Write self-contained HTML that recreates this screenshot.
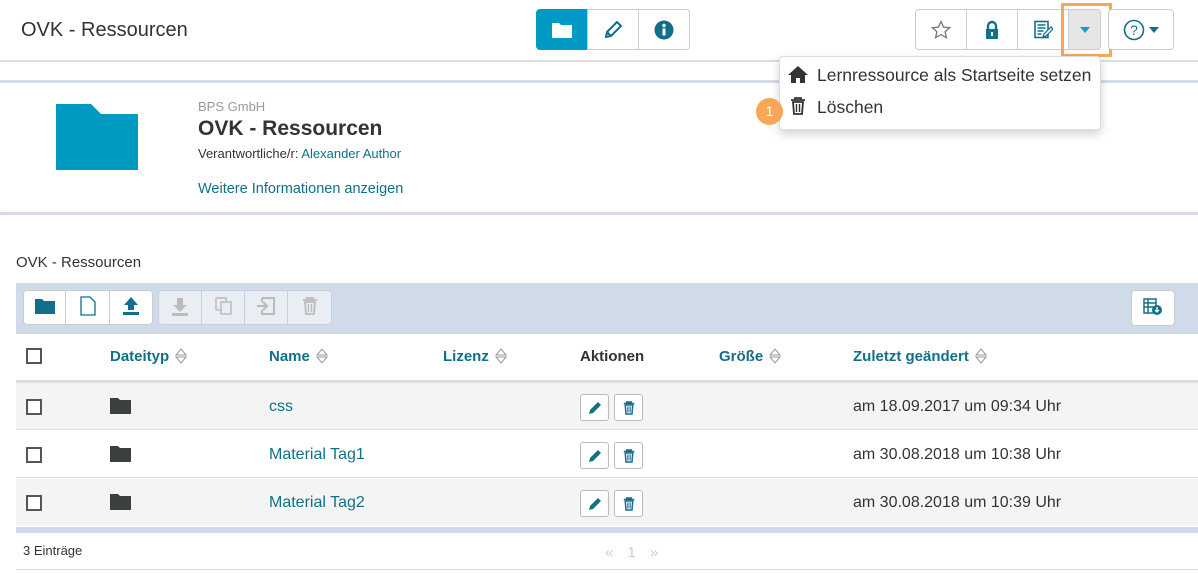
<!DOCTYPE html>
<html><head><meta charset="utf-8"><style>
*{box-sizing:border-box;margin:0;padding:0}
body{width:1198px;height:574px;position:relative;background:#fff;font-family:"Liberation Sans",Arial,sans-serif;color:#333;overflow:hidden}
.a{position:absolute}
.btn{position:absolute;border:1px solid #ccc;background:#fff;display:flex;align-items:center;justify-content:center}
.teal{color:#117089}
.th{position:absolute;top:348px;font-size:15px;font-weight:bold;color:#117089}
.sort{display:inline-block;width:12px;height:16px;vertical-align:-3px;margin-left:6px}
.cb{position:absolute;left:26px;width:16px;height:16px;border:2px solid #555;background:#fff}
.row{position:absolute;left:0;width:1198px;height:47px}
.ab{position:absolute;width:29px;height:27px;border:1px solid #bbb;border-radius:3px;background:#fff;display:flex;align-items:center;justify-content:center}
.cell{position:absolute;font-size:16px}
</style></head><body>
<div class="a" style="left:21px;top:19px;font-size:20px;color:#333">OVK - Ressourcen</div>

<div class="btn" style="left:536px;top:9px;width:52px;height:41px;background:#009ac4;border-color:#009ac4;border-radius:4px 0 0 4px">
<svg width="22" height="18" viewBox="0 0 22 18"><path d="M1 2h7l2 2h11v13H1z" fill="#fff"/></svg></div>
<div class="btn" style="left:587px;top:9px;width:52px;height:41px">
<svg width="20" height="20" viewBox="0 0 20 20"><path d="M3 17l1-5L14 2l4 4L8 16z" fill="none" stroke="#117089" stroke-width="2"/><path d="M4 12l4 4" stroke="#117089" stroke-width="2"/></svg></div>
<div class="btn" style="left:638px;top:9px;width:52px;height:41px;border-radius:0 4px 4px 0">
<svg width="20" height="20" viewBox="0 0 20 20"><circle cx="10" cy="10" r="9.5" fill="#117089"/><rect x="8.5" y="8.5" width="3" height="7" fill="#fff"/><circle cx="10" cy="5.5" r="1.7" fill="#fff"/></svg></div>

<div class="btn" style="left:915px;top:9px;width:52px;height:41px;border-radius:4px 0 0 4px">
<svg width="20" height="20" viewBox="0 0 20 20"><path d="M10 1.5l2.6 5.6 6 .6-4.5 4 1.3 6L10 14.6 4.6 17.7l1.3-6L1.4 7.7l6-.6z" fill="none" stroke="#777" stroke-width="1.3"/></svg></div>
<div class="btn" style="left:966px;top:9px;width:52px;height:41px">
<svg width="16" height="20" viewBox="0 0 16 20"><path d="M4 9V6a4 4 0 0 1 8 0v3" fill="none" stroke="#117089" stroke-width="2.4"/><rect x="2" y="9" width="12" height="10" fill="#117089"/><rect x="7" y="12" width="2" height="4" fill="#fff"/></svg></div>
<div class="btn" style="left:1017px;top:9px;width:52px;height:41px">
<svg width="20" height="20" viewBox="0 0 20 20"><rect x="2" y="1.5" width="13" height="16" fill="none" stroke="#117089" stroke-width="1.6"/><path d="M4.5 5h8M4.5 8h8M4.5 11h6M4.5 14h4" stroke="#117089" stroke-width="1.4"/><path d="M10 17l1-3 7-7 2 2-7 7z" fill="#fff" stroke="#117089" stroke-width="1.2"/></svg></div>
<div class="btn" style="left:1068px;top:9px;width:33px;height:41px;background:#e6e6e6;border-radius:0 4px 4px 0">
<svg width="10" height="6"><path d="M0 0h10L5 6z" fill="#0aa0cc"/></svg></div>
<div class="a" style="left:1061px;top:3px;width:51px;height:54px;border:3px solid #f7a857"></div>
<div class="btn" style="left:1108px;top:9px;width:66px;height:41px;border-radius:4px">
<svg width="22" height="22" viewBox="0 0 22 22"><circle cx="11" cy="11" r="9.5" fill="none" stroke="#117089" stroke-width="1.6"/><text x="11" y="16" font-size="14" text-anchor="middle" fill="#117089" font-family="Liberation Sans">?</text></svg>
<svg width="10" height="6" style="margin-left:4px"><path d="M0 0h10L5 6z" fill="#117089"/></svg></div>

<div class="a" style="left:0;top:60px;width:1198px;height:2px;background:#ddd"></div>

<div class="a" style="left:-3px;top:80px;width:1205px;height:135px;border:3px solid #d3dce8;border-radius:4px"></div>
<svg class="a" style="left:56px;top:104px" width="82" height="66" viewBox="0 0 82 66"><path d="M0 0h35l10 10h37v56H0z" fill="#009bc0"/></svg>
<div class="a" style="left:198px;top:99px;font-size:13px;color:#999">BPS GmbH</div>
<div class="a" style="left:198px;top:117px;font-size:21px;font-weight:bold;color:#333">OVK - Ressourcen</div>
<div class="a" style="left:198px;top:146px;font-size:13px;color:#333">Verantwortliche/r: <span class="teal">Alexander Author</span></div>
<div class="a" style="left:198px;top:181px;font-size:14.5px;color:#117089">Weitere Informationen anzeigen</div>

<div class="a" style="left:779px;top:56px;width:322px;height:74px;background:#fff;border:1px solid #ddd;border-radius:4px;box-shadow:0 4px 10px rgba(0,0,0,.18)"></div>
<svg class="a" style="left:788px;top:66px" width="20" height="17" viewBox="0 0 20 17"><path d="M10 0L0 9h3v8h5v-5h4v5h5V9h3z" fill="#333"/></svg>
<div class="a" style="left:817px;top:65px;font-size:17.5px;color:#333">Lernressource als Startseite setzen</div>
<svg class="a" style="left:790px;top:97px" width="16" height="18" viewBox="0 0 16 18"><path d="M1 3h14M5 3V1h6v2" stroke="#333" stroke-width="1.8" fill="none"/><path d="M3 5h10l-1 12H4z" fill="none" stroke="#333" stroke-width="1.8"/><path d="M6.5 7v8M9.5 7v8" stroke="#333" stroke-width="1.4"/></svg>
<div class="a" style="left:817px;top:97px;font-size:17.5px;color:#333">Löschen</div>
<div class="a" style="left:756px;top:98px;width:27px;height:27px;border-radius:50%;background:#f7a857;color:#fff;font-size:14px;text-align:center;line-height:27px">1</div>

<div class="a" style="left:16px;top:254px;font-size:15px;color:#333">OVK - Ressourcen</div>

<div class="a" style="left:16px;top:283px;width:1182px;height:51px;background:#cfdbe8"></div>
<div class="a" style="left:23px;top:290px;width:130px;height:35px;background:#fff;border:1px solid #ccc;border-radius:4px"></div>
<div class="a" style="left:65px;top:290px;width:1px;height:35px;background:#ccc"></div>
<div class="a" style="left:109px;top:290px;width:1px;height:35px;background:#ccc"></div>
<svg class="a" style="left:35px;top:298px" width="20" height="17" viewBox="0 0 20 17"><path d="M0 1h7l2 2h11v13H0z" fill="#117089"/></svg>
<svg class="a" style="left:80px;top:296px" width="16" height="20" viewBox="0 0 16 20"><path d="M1 1h9l5 5v13H1z" fill="none" stroke="#117089" stroke-width="1.3"/></svg>
<svg class="a" style="left:122px;top:296px" width="18" height="20" viewBox="0 0 18 20"><path d="M9 1l7 8h-4v5H6V9H2z" fill="#117089"/><rect x="1" y="16" width="16" height="3" fill="#117089"/></svg>
<div class="a" style="left:158px;top:290px;width:174px;height:35px;background:#e9edf4;border:1px solid #ccd;border-radius:4px"></div>
<div class="a" style="left:201px;top:290px;width:1px;height:35px;background:#ccd"></div>
<div class="a" style="left:244px;top:290px;width:1px;height:35px;background:#ccd"></div>
<div class="a" style="left:287px;top:290px;width:1px;height:35px;background:#ccd"></div>
<svg class="a" style="left:171px;top:297px" width="18" height="20" viewBox="0 0 18 20"><path d="M6 1h6v7h4l-7 7-7-7h4z" fill="#bbb"/><rect x="1" y="16" width="16" height="3" fill="#bbb"/></svg>
<svg class="a" style="left:214px;top:296px" width="20" height="20" viewBox="0 0 20 20"><rect x="2" y="2" width="10" height="12" fill="none" stroke="#bbb" stroke-width="1.5"/><rect x="7" y="6" width="10" height="12" fill="#e9edf4" stroke="#bbb" stroke-width="1.5"/></svg>
<svg class="a" style="left:256px;top:296px" width="20" height="20" viewBox="0 0 20 20"><path d="M6 2h12v16H6v-4M6 6V2" fill="none" stroke="#bbb" stroke-width="2"/><path d="M1 10h9M7 6l4 4-4 4" fill="none" stroke="#bbb" stroke-width="2"/></svg>
<svg class="a" style="left:302px;top:297px" width="16" height="18" viewBox="0 0 16 18"><path d="M1 3h14M5 3V1h6v2" stroke="#bbb" stroke-width="1.8" fill="none"/><path d="M3 5h10l-1 12H4z" fill="none" stroke="#bbb" stroke-width="1.8"/><path d="M6.5 7v8M9.5 7v8" stroke="#bbb" stroke-width="1.4"/></svg>
<div class="a" style="left:1131px;top:290px;width:44px;height:36px;background:#fff;border:1px solid #ccc;border-radius:4px"></div>
<svg class="a" style="left:1143px;top:298px" width="20" height="18" viewBox="0 0 20 18"><path d="M1 1h12v14H1zM1 5h12M1 9h12M5 1v14" fill="none" stroke="#117089" stroke-width="1.5"/><circle cx="14" cy="12" r="5" fill="#117089"/><path d="M14 9v4M12 12l2 2 2-2" stroke="#fff" stroke-width="1.3" fill="none"/></svg>

<div class="cb" style="top:348px"></div>
<div class="th" style="left:110px">Dateityp<svg class="sort" viewBox="0 0 12 16"><path d="M1 7L6 1l5 6zM1 9l5 6 5-6z" fill="none" stroke="#999"/></svg></div>
<div class="th" style="left:269px">Name<svg class="sort" viewBox="0 0 12 16"><path d="M1 7L6 1l5 6zM1 9l5 6 5-6z" fill="none" stroke="#999"/></svg></div>
<div class="th" style="left:443px">Lizenz<svg class="sort" viewBox="0 0 12 16"><path d="M1 7L6 1l5 6zM1 9l5 6 5-6z" fill="none" stroke="#999"/></svg></div>
<div class="th" style="left:580px;color:#333">Aktionen</div>
<div class="th" style="left:719px">Größe<svg class="sort" viewBox="0 0 12 16"><path d="M1 7L6 1l5 6zM1 9l5 6 5-6z" fill="none" stroke="#999"/></svg></div>
<div class="th" style="left:853px">Zuletzt geändert<svg class="sort" viewBox="0 0 12 16"><path d="M1 7L6 1l5 6zM1 9l5 6 5-6z" fill="none" stroke="#999"/></svg></div>
<div class="a" style="left:16px;top:380px;width:1182px;height:3px;background:#ddd"></div>

<div class="row" style="top:383px;left:16px;width:1182px;background:#f4f4f4;border-bottom:1px solid #ddd"></div>
<div class="row" style="top:431px;left:16px;width:1182px;background:#fff;border-bottom:1px solid #ddd"></div>
<div class="row" style="top:479px;left:16px;width:1182px;background:#f4f4f4"></div>
<div class="a" style="left:16px;top:527px;width:1182px;height:6px;background:#cfdbe8"></div>

<div class="cb" style="top:399px"></div>
<div class="cb" style="top:447px"></div>
<div class="cb" style="top:495px"></div>
<svg class="a" style="left:110px;top:398px" width="21" height="16" viewBox="0 0 21 16"><path d="M0 0h8l2 2h11v14H0z" fill="#3b3f40"/></svg>
<svg class="a" style="left:110px;top:446px" width="21" height="16" viewBox="0 0 21 16"><path d="M0 0h8l2 2h11v14H0z" fill="#3b3f40"/></svg>
<svg class="a" style="left:110px;top:494px" width="21" height="16" viewBox="0 0 21 16"><path d="M0 0h8l2 2h11v14H0z" fill="#3b3f40"/></svg>
<div class="cell teal" style="left:269px;top:398px">css</div>
<div class="cell teal" style="left:269px;top:446px">Material Tag1</div>
<div class="cell teal" style="left:269px;top:494px">Material Tag2</div>
<div class="cell" style="left:853px;top:398px">am 18.09.2017 um 09:34 Uhr</div>
<div class="cell" style="left:853px;top:446px">am 30.08.2018 um 10:38 Uhr</div>
<div class="cell" style="left:853px;top:494px">am 30.08.2018 um 10:39 Uhr</div>

<div class="ab" style="left:580px;top:394px"><svg width="14" height="14" viewBox="0 0 14 14"><path d="M1 13l1-4 8-8 3 3-8 8z" fill="#117089"/></svg></div>
<div class="ab" style="left:614px;top:394px"><svg width="12" height="14" viewBox="0 0 16 18"><path d="M1 3h14M5 3V1h6v2" stroke="#117089" stroke-width="2" fill="none"/><path d="M3 5h10l-1 12H4z" fill="none" stroke="#117089" stroke-width="2"/><path d="M6.5 7v8M9.5 7v8" stroke="#117089" stroke-width="1.6"/></svg></div>
<div class="ab" style="left:580px;top:442px"><svg width="14" height="14" viewBox="0 0 14 14"><path d="M1 13l1-4 8-8 3 3-8 8z" fill="#117089"/></svg></div>
<div class="ab" style="left:614px;top:442px"><svg width="12" height="14" viewBox="0 0 16 18"><path d="M1 3h14M5 3V1h6v2" stroke="#117089" stroke-width="2" fill="none"/><path d="M3 5h10l-1 12H4z" fill="none" stroke="#117089" stroke-width="2"/><path d="M6.5 7v8M9.5 7v8" stroke="#117089" stroke-width="1.6"/></svg></div>
<div class="ab" style="left:580px;top:490px"><svg width="14" height="14" viewBox="0 0 14 14"><path d="M1 13l1-4 8-8 3 3-8 8z" fill="#117089"/></svg></div>
<div class="ab" style="left:614px;top:490px"><svg width="12" height="14" viewBox="0 0 16 18"><path d="M1 3h14M5 3V1h6v2" stroke="#117089" stroke-width="2" fill="none"/><path d="M3 5h10l-1 12H4z" fill="none" stroke="#117089" stroke-width="2"/><path d="M6.5 7v8M9.5 7v8" stroke="#117089" stroke-width="1.6"/></svg></div>

<div class="a" style="left:23px;top:543px;font-size:13px;color:#333">3 Einträge</div>
<div class="a" style="left:605px;top:544px;font-size:15px;color:#ccc;word-spacing:10px">« 1 »</div>
<div class="a" style="left:16px;top:569px;width:1182px;height:1px;background:#d3dce8"></div>
</body></html>
